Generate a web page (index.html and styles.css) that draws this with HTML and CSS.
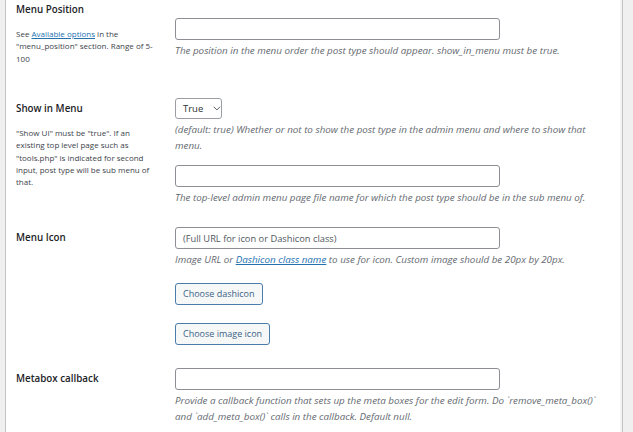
FILE: index.html
```html
<!DOCTYPE html>
<html lang="en">
<head>
<meta charset="utf-8">
<title>Post type settings</title>
<link rel="stylesheet" href="styles.css">
</head>
<body>
<div class="postbox">
  <div class="row row-position">
    <div class="th">
      <div class="label">Menu Position</div>
      <p class="help">See <a href="#">Available options</a> in the "menu_position" section. Range of 5-100</p>
    </div>
    <div class="td">
      <input class="text" type="text">
      <p class="desc">The position in the menu order the post type should appear. show_in_menu must be true.</p>
    </div>
  </div>

  <div class="row row-show">
    <div class="th">
      <div class="label">Show in Menu</div>
      <p class="help">"Show UI" must be "true". If an existing top level page such as "tools.php" is indicated for second input, post type will be sub menu of that.</p>
    </div>
    <div class="td">
      <div class="select">True
        <svg class="chev" width="8" height="5" viewBox="0 0 8 5"><path d="M0.7 0.7 L4 4 L7.3 0.7" fill="none" stroke="#50575e" stroke-width="1"/></svg>
      </div>
      <p class="desc">(default: true) Whether or not to show the post type in the admin menu and where to show that menu.</p>
      <input class="text text-gap" type="text">
      <p class="desc">The top-level admin menu page file name for which the post type should be in the sub menu of.</p>
    </div>
  </div>

  <div class="row row-icon">
    <div class="th">
      <div class="label">Menu Icon</div>
    </div>
    <div class="td">
      <input class="text" type="text" placeholder="(Full URL for icon or Dashicon class)">
      <p class="desc">Image URL or <a href="#">Dashicon class name</a> to use for icon. Custom image should be 20px by 20px.</p>
      <div class="btn btn-first">Choose dashicon</div>
      <div class="btn btn-second">Choose image icon</div>
    </div>
  </div>

  <div class="row row-meta">
    <div class="th">
      <div class="label">Metabox callback</div>
    </div>
    <div class="td">
      <input class="text" type="text">
      <p class="desc">Provide a callback function that sets up the meta boxes for the edit form. Do `remove_meta_box()` and `add_meta_box()` calls in the callback. Default null.</p>
    </div>
  </div>
</div>
</body>
</html>
```

FILE: styles.css
```css
html, body {
  margin: 0;
  padding: 0;
  background: #f0f0f1;
  font-family: "Open Sans", "Noto Sans", sans-serif;
  color: #1d2327;
}

.postbox {
  margin-left: 5px;
  width: 616px;
  min-height: 440px;
  background: #fff;
  border-left: 1px solid #c3c4c7;
  border-right: 1px solid #c3c4c7;
  box-shadow: inset -2px 0 0 #f3f3f3;
}

.row {
  display: flex;
  align-items: flex-start;
}

.th {
  width: 143px;
  padding: 0 16px 0 10px;
  flex: none;
}

.td {
  flex: 1;
  display: flex;
  flex-direction: column;
  align-items: flex-start;
}

.label {
  font-size: 9.8px;
  font-weight: 600;
  line-height: 14px;
  color: #1d2327;
}

.help {
  margin: 11px 0 0;
  font-size: 8px;
  line-height: 12.3px;
  color: #3c434a;
}

a {
  color: #2271b1;
  text-decoration: underline;
}

.text {
  box-sizing: border-box;
  width: 325px;
  height: 22px;
  margin: 0;
  padding: 0 7px;
  border: 1px solid #8c8f94;
  border-radius: 3px;
  background: #fff;
  font-family: inherit;
  font-size: 9.3px;
  color: #2c3338;
}

.text::placeholder {
  color: #50575e;
  opacity: 1;
}

.desc {
  margin: 3px 0 0;
  font-size: 9.8px;
  font-style: italic;
  line-height: 15.5px;
  color: #646970;
  max-width: 430px;
}

.select {
  box-sizing: border-box;
  width: 47px;
  height: 21px;
  border: 1px solid #9a9ea3;
  border-radius: 3px;
  padding-left: 7px;
  display: flex;
  align-items: center;
  gap: 10px;
  font-size: 9.5px;
  color: #2c3338;
}

.btn {
  box-sizing: border-box;
  height: 22px;
  padding: 0 7px;
  display: flex;
  align-items: center;
  border: 1px solid #4a7dab;
  border-radius: 3px;
  background: #f6f7f7;
  color: #3b6387;
  font-size: 9px;
}

/* vertical rhythm per row */
.row-position .th { padding-top: 3px; }
.row-position .td { padding-top: 18px; }
.row-position { height: 86px; }

.row-show .th { padding-top: 16px; }
.row-show .td { padding-top: 12px; }
.row-show .text-gap { margin-top: 12px; }
.row-show { height: 129px; }

.row-icon .th { padding-top: 16px; }
.row-icon .td { padding-top: 12px; }
.btn-first { margin-top: 15px; }
.btn-second { margin-top: 18px; }
.row-icon { height: 141px; }

.row-meta .th { padding-top: 16px; }
.row-meta .td { padding-top: 12px; }
```
